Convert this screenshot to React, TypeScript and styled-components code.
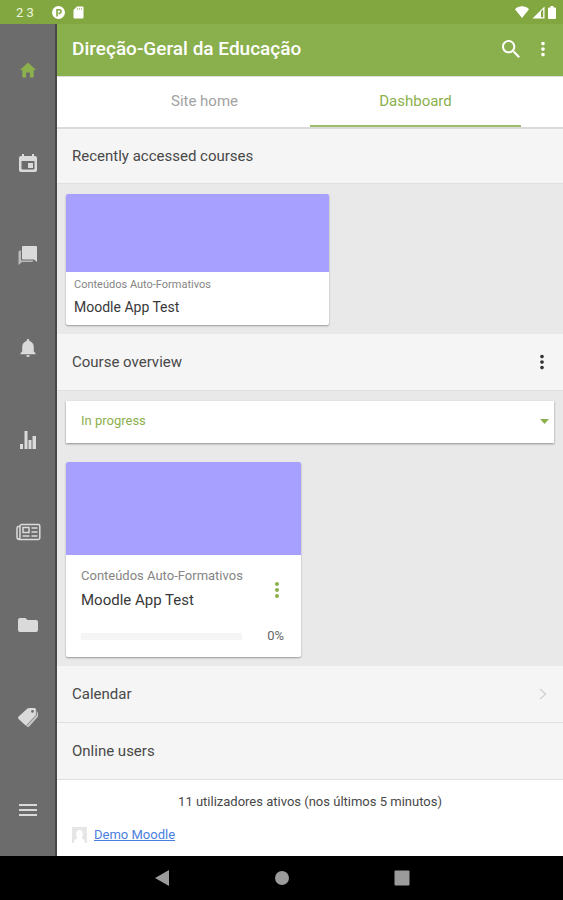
import React from "react";
import styled, { createGlobalStyle } from "styled-components";
import { IoMdHome, IoMdNotifications, IoMdSearch } from "react-icons/io";
import { MdMoreVert } from "react-icons/md";

const GlobalStyle = createGlobalStyle`
  *, *::before, *::after { box-sizing: border-box; }
  html, body, #root { height: 100%; margin: 0; }
  body { font-family: Roboto, "Liberation Sans", sans-serif; color: #484848; background: #000; }
  button, select { font: inherit; color: inherit; border: 0; background: none; padding: 0; margin: 0; cursor: pointer; }
  svg { display: block; flex: none; }
  h1, h2, h3, p, ul { margin: 0; padding: 0; font-weight: 400; }
`;

const Screen = styled.div`
  min-height: 100%;
  display: flex;
  flex-direction: column;
`;

const StatusBar = styled.div`
  height: 24px;
  display: flex;
  align-items: center;
  justify-content: space-between;
  padding: 0 7px 0 16px;
  background: #82a740;
  color: #fff;
  font-size: 13px;
`;

const StatusGroup = styled.div<{ $gap: number }>`
  display: flex;
  align-items: center;
  gap: ${(p) => p.$gap}px;
`;

const Clock = styled.span`
  width: 28px;
  color: #eef5dc;
`;

const Body = styled.div`
  flex: 1;
  display: flex;
`;

const SideNav = styled.nav`
  flex: 0 0 57px;
  display: flex;
  flex-direction: column;
  background: #6c6c6c;
  border-right: 2px solid #484848;
`;

const SideButton = styled.button<{ $active?: boolean }>`
  flex: 1;
  display: flex;
  align-items: center;
  justify-content: center;
  color: ${(p) => (p.$active ? "#8bb04c" : "#dadada")};
`;

const Main = styled.main`
  flex: 1;
  min-width: 0;
  display: flex;
  flex-direction: column;
  background: #fff;
`;

const Header = styled.header`
  height: 52px;
  display: flex;
  align-items: center;
  padding: 0 9px 2px 15px;
  background: #8aaf4d;
  color: #fff;
`;

const Title = styled.h1`
  flex: 1;
  font-size: 19px;
  line-height: 24px;
  font-weight: 500;
`;

const IconButton = styled.button<{ $color: string }>`
  display: flex;
  align-items: center;
  justify-content: center;
  min-width: 20px;
  height: 32px;
  color: ${(p) => p.$color};
`;

const HeaderActions = styled.div`
  display: flex;
  align-items: center;
  gap: 9px;
`;

const Tabs = styled.div`
  height: 53px;
  display: grid;
  grid-template-columns: 1fr 1fr;
  padding: 0 42px;
  border-top: 1px solid #ddd;
  border-bottom: 2px solid #dadada;
`;

const Tab = styled.button<{ $active?: boolean }>`
  font-size: 15px;
  padding-bottom: 2px;
  color: ${(p) => (p.$active ? "#8bb04c" : "#a2a2a2")};
  box-shadow: ${(p) => (p.$active ? "inset 0 -2px #9fbe6c" : "none")};
`;

const SectionHead = styled.div`
  min-height: 57px;
  display: flex;
  align-items: center;
  justify-content: space-between;
  padding: 0 10px 0 15px;
  background: #f5f5f5;
  border-bottom: 1px solid #dfdfdf;
`;

const FirstHead = styled(SectionHead)`
  min-height: 55px;
`;

const SectionTitle = styled.h2`
  font-size: 15px;
  line-height: 20px;
`;

const Panel = styled.section`
  padding: 10px 9px 9px;
  background: #e9e9e9;
`;

const Card = styled.article<{ $width: number }>`
  width: ${(p) => p.$width}px;
  max-width: 100%;
  background: #fff;
  border-radius: 2px;
  overflow: hidden;
  box-shadow: 0 1px 2px rgba(0, 0, 0, 0.35);
`;

const Cover = styled.div<{ $height: number }>`
  height: ${(p) => p.$height}px;
  background: #a7a0ff;
`;

const CompactInfo = styled.div`
  padding: 5px 8px 4px;
`;

const Category = styled.p<{ $small?: boolean }>`
  font-size: ${(p) => (p.$small ? 11 : 13)}px;
  line-height: ${(p) => (p.$small ? 16 : 20)}px;
  color: #858585;
`;

const CourseName = styled.h3<{ $small?: boolean }>`
  font-size: ${(p) => (p.$small ? 14 : 15)}px;
  line-height: 28px;
  color: #383838;
`;

const CardRow = styled.div`
  display: flex;
  align-items: center;
  justify-content: space-between;
  padding: 11px 12px 0 15px;
`;

const ProgressRow = styled.div`
  display: flex;
  align-items: center;
  gap: 25px;
  padding: 12px 17px 11px 15px;
  font-size: 13px;
  line-height: 20px;
  color: #666;
`;

const Progress = styled.progress`
  flex: 1;
  min-width: 0;
  height: 7px;
  appearance: none;
  border: 0;
  background: #f5f5f5;
  &::-webkit-progress-bar { background: #f5f5f5; }
  &::-webkit-progress-value { background: #8bb04c; }
`;

const Filter = styled.div`
  display: grid;
  align-items: center;
  margin-bottom: 19px;
  background: #fff;
  color: #8bb04c;
  box-shadow: 0 1px 2px rgba(0, 0, 0, 0.4);
  > * { grid-area: 1 / 1; }
  > svg { justify-self: end; margin: 0 5px 2px 0; pointer-events: none; }
`;

const Select = styled.select`
  appearance: none;
  width: 100%;
  height: 42px;
  padding: 0 20px 3px 15px;
  font-size: 13px;
`;

const OnlineCount = styled.p`
  padding: 12px 9px 8px;
  text-align: center;
  font-size: 13px;
  line-height: 20px;
`;

const UserList = styled.ul`
  list-style: none;
  padding: 5px 15px 11px;
`;

const User = styled.li`
  display: flex;
  align-items: center;
  gap: 7px;
  font-size: 13px;
  line-height: 20px;
  a { color: #4a7fe0; text-decoration: underline; }
`;

const SystemNav = styled.nav`
  height: 44px;
  display: flex;
  align-items: center;
  justify-content: center;
  gap: 100px;
  background: #000;
  color: #9b9b9b;
`;

const CalendarIcon = () => (
  <svg width="20" height="20" viewBox="0 0 20 20" fill="currentColor" aria-hidden="true">
    <path
      fillRule="evenodd"
      d="M4 1h2v2h8V1h2v2h1a2 2 0 0 1 2 2v12a2 2 0 0 1-2 2H3a2 2 0 0 1-2-2V5a2 2 0 0 1 2-2h1zM3.500 8v7.500a1 1 0 0 0 1 1h11a1 1 0 0 0 1-1V8z"
    />
    <rect x="10" y="10" width="5" height="5" />
  </svg>
);

const ChatIcon = () => (
  <svg width="20" height="20" viewBox="0 0 20 20" fill="currentColor" aria-hidden="true">
    <path d="M5 1h13a1 1 0 0 1 1 1v15l-3-2.500H5a1 1 0 0 1-1-1V2a1 1 0 0 1 1-1z" />
    <path opacity=".72" d="M2 5.500h1V14.500a1 1 0 0 0 1 1h11V16a1 1 0 0 1-1 1H4L.5 20V7A1.500 1.500 0 0 1 2 5.500z" />
  </svg>
);

const StatsIcon = () => (
  <svg width="18" height="20" viewBox="0 0 18 20" fill="currentColor" aria-hidden="true">
    <rect x="1" y="14" width="3" height="5" />
    <rect x="5.500" y="1" width="3" height="18" />
    <rect x="9.500" y="10" width="3" height="9" />
    <rect x="13.500" y="6" width="3.500" height="13" />
  </svg>
);

const NewsIcon = () => (
  <svg width="26" height="18" viewBox="0 0 26 18" fill="none" stroke="currentColor" aria-hidden="true">
    <path strokeWidth="1.500" d="M5 3.500H3.500A1.500 1.500 0 0 0 2 5v9a2.500 2.500 0 0 0 2.500 2.500H23a1.800 1.800 0 0 0 1.800-1.800V3A1.500 1.500 0 0 0 23.300 1.500H6.500A1.500 1.500 0 0 0 5 3v11.500a1.500 1.500 0 0 1-1.500 1.500" />
    <rect x="8" y="4.500" width="6" height="5" strokeWidth="1.500" />
    <path strokeWidth="1.500" d="M7.500 13h7M16.500 5h6M16.500 9h6M16.500 13h6" />
  </svg>
);

const FolderIcon = () => (
  <svg width="22" height="18" viewBox="0 0 22 18" fill="currentColor" aria-hidden="true">
    <path d="M3 2h5.500l2 2H19a2 2 0 0 1 2 2v8a2 2 0 0 1-2 2H3a2 2 0 0 1-2-2V4a2 2 0 0 1 2-2z" />
  </svg>
);

const TagsIcon = () => (
  <svg width="22" height="21" viewBox="0 0 22 21" aria-hidden="true">
    <path fill="#c6c6c6" d="M18.500 2.500l2 2.500c.8 1 .8 3.500.2 5l-8.500 9.500c-.6.700-1.500.7-2.200 0L8.500 18z" />
    <path
      fill="currentColor"
      fillRule="evenodd"
      d="M10.500 1.500c.4-.4 1-.6 1.500-.6h5.200c1 0 1.800.8 1.800 1.800v5c0 .6-.2 1.100-.6 1.500l-8.200 8.500c-.7.700-1.700.7-2.400 0L1.600 12c-.7-.7-.7-1.700 0-2.400zM15.500 3a1.400 1.400 0 1 0 0 2.800 1.400 1.400 0 0 0 0-2.800z"
    />
    <path fill="none" stroke="#6c6c6c" strokeWidth=".8" d="M19.300 3.500v4.700l-9.500 10" />
  </svg>
);

const MenuIcon = () => (
  <svg width="18" height="14" viewBox="0 0 18 14" fill="currentColor" aria-hidden="true">
    <path d="M0 1h18v2H0zM0 6h18v2H0zM0 11h18v2H0z" />
  </svg>
);

const ParkingIcon = () => (
  <svg width="13" height="13" viewBox="0 0 13 13" aria-hidden="true">
    <circle cx="6.500" cy="6.500" r="6.500" fill="#fff" />
    <path d="M5 10.500V3.800h2.800a1.900 1.900 0 0 1 0 3.600H6.500" fill="none" stroke="#82a740" strokeWidth="1.600" />
  </svg>
);

const SdCardIcon = () => (
  <svg width="11" height="13" viewBox="0 0 11 13" aria-hidden="true">
    <path d="M4 .5h5.500a1 1 0 0 1 1 1v10a1 1 0 0 1-1 1h-8a1 1 0 0 1-1-1V4z" fill="#fff" />
    <path d="M4.500 2v2M6.500 2v2M8.500 2v2" stroke="#b8cd91" />
  </svg>
);

const WifiIcon = () => (
  <svg width="14" height="12" viewBox="0 0 14 12" fill="#fff" aria-hidden="true">
    <path d="M0 3.200C4-.6 10-.6 14 3.200L7 12z" />
  </svg>
);

const SignalIcon = () => (
  <svg width="13" height="13" viewBox="0 0 13 13" aria-hidden="true">
    <path d="M12.500.5v12H.5z" fill="#fff" />
    <path d="M9 5.500l2.200-2.200v7.900H9z" fill="#82a740" />
  </svg>
);

const BatteryIcon = () => (
  <svg width="8" height="13" viewBox="0 0 8 13" fill="#fff" aria-hidden="true">
    <path d="M2.500 0h3v1.500H7a1 1 0 0 1 1 1V12a1 1 0 0 1-1 1H1a1 1 0 0 1-1-1V2.500a1 1 0 0 1 1-1h1.500z" />
  </svg>
);

const AvatarIcon = () => (
  <svg width="15" height="16" viewBox="0 0 15 16" aria-hidden="true">
    <rect width="15" height="16" fill="#e6e6e6" />
    <path d="M2 16c0-3 1.500-4 3.500-4.500C3.500 9 3.500 3 7.500 3s4 6 2 8.500C11.500 12 13 13 13 16z" fill="#fff" />
  </svg>
);

const sideItems = [
  { label: "Home", icon: <IoMdHome size={20} />, active: true },
  { label: "Calendar", icon: <CalendarIcon /> },
  { label: "Messages", icon: <ChatIcon /> },
  { label: "Notifications", icon: <IoMdNotifications size={22} /> },
  { label: "Grades", icon: <StatsIcon /> },
  { label: "Site news", icon: <NewsIcon /> },
  { label: "Files", icon: <FolderIcon /> },
  { label: "Tags", icon: <TagsIcon /> },
  { label: "More", icon: <MenuIcon /> },
];

export default function App() {
  return (
    <>
      <GlobalStyle />
      <Screen>
        <StatusBar>
          <StatusGroup $gap={8}>
            <Clock>2 3</Clock>
            <ParkingIcon />
            <SdCardIcon />
          </StatusGroup>
          <StatusGroup $gap={3}>
            <WifiIcon />
            <SignalIcon />
            <BatteryIcon />
          </StatusGroup>
        </StatusBar>
        <Body>
          <SideNav aria-label="Main menu">
            {sideItems.map((item) => (
              <SideButton key={item.label} type="button" aria-label={item.label} $active={item.active}>
                {item.icon}
              </SideButton>
            ))}
          </SideNav>
          <Main>
            <Header>
              <Title>Direção-Geral da Educação</Title>
              <HeaderActions>
                <IconButton type="button" aria-label="Search" $color="#fff"><IoMdSearch size={24} /></IconButton>
                <IconButton type="button" aria-label="Options" $color="#fff"><MdMoreVert size={22} /></IconButton>
              </HeaderActions>
            </Header>
            <Tabs role="tablist">
              <Tab type="button" role="tab" aria-selected={false}>Site home</Tab>
              <Tab type="button" role="tab" aria-selected $active>Dashboard</Tab>
            </Tabs>
            <FirstHead><SectionTitle>Recently accessed courses</SectionTitle></FirstHead>
            <Panel>
              <Card $width={263}>
                <Cover $height={78} />
                <CompactInfo>
                  <Category $small>Conteúdos Auto-Formativos</Category>
                  <CourseName $small>Moodle App Test</CourseName>
                </CompactInfo>
              </Card>
            </Panel>
            <SectionHead>
              <SectionTitle>Course overview</SectionTitle>
              <IconButton type="button" aria-label="Course overview options" $color="#333"><MdMoreVert size={22} /></IconButton>
            </SectionHead>
            <Panel>
              <Filter>
                <Select aria-label="Filter courses" defaultValue="In progress">
                  <option>In progress</option>
                </Select>
                <svg width="9" height="5" viewBox="0 0 9 5" fill="currentColor" aria-hidden="true"><path d="M0 0h9L4.500 5z" /></svg>
              </Filter>
              <Card $width={235}>
                <Cover $height={93} />
                <CardRow>
                  <div>
                    <Category>Conteúdos Auto-Formativos</Category>
                    <CourseName>Moodle App Test</CourseName>
                  </div>
                  <IconButton type="button" aria-label="Course options" $color="#8bb04c"><MdMoreVert size={24} /></IconButton>
                </CardRow>
                <ProgressRow>
                  <Progress value={0} max={100} aria-label="Course progress" />
                  <span>0%</span>
                </ProgressRow>
              </Card>
            </Panel>
            <SectionHead>
              <SectionTitle>Calendar</SectionTitle>
              <IconButton type="button" aria-label="Open calendar" $color="#d4d4d4">
                <svg width="8" height="12" viewBox="0 0 8 12" fill="none" stroke="currentColor" strokeWidth="1.500" aria-hidden="true"><path d="M1 1l5.500 5L1 11" /></svg>
              </IconButton>
            </SectionHead>
            <SectionHead><SectionTitle>Online users</SectionTitle></SectionHead>
            <OnlineCount>11 utilizadores ativos (nos últimos 5 minutos)</OnlineCount>
            <UserList>
              <User><AvatarIcon /><a href="#demo-moodle">Demo Moodle</a></User>
            </UserList>
          </Main>
        </Body>
        <SystemNav aria-label="System navigation">
          <IconButton type="button" aria-label="Back" $color="#9b9b9b">
            <svg width="14" height="16" viewBox="0 0 14 16" fill="currentColor"><path d="M0 8L14 0v16z" /></svg>
          </IconButton>
          <IconButton type="button" aria-label="Home screen" $color="#9b9b9b">
            <svg width="14" height="14" viewBox="0 0 14 14" fill="currentColor"><circle cx="7" cy="7" r="7" /></svg>
          </IconButton>
          <IconButton type="button" aria-label="Recent apps" $color="#9b9b9b">
            <svg width="16" height="16" viewBox="0 0 16 16" fill="currentColor"><rect x=".5" y=".5" width="15" height="15" rx="1" /></svg>
          </IconButton>
        </SystemNav>
      </Screen>
    </>
  );
}
